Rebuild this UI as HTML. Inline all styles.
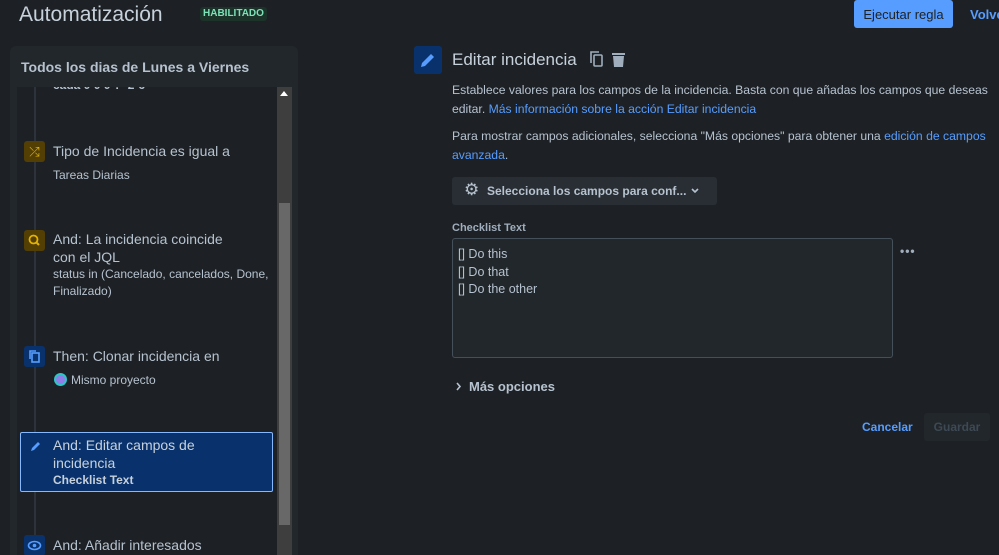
<!DOCTYPE html>
<html><head><meta charset="utf-8"><style>
*{margin:0;padding:0;box-sizing:border-box}
html,body{width:999px;height:555px;overflow:hidden}
body{background:#1d2125;font-family:"Liberation Sans",sans-serif;color:#b6c2cf;position:relative}
.a{position:absolute}
.t{font-size:14px;color:#b6c2cf;line-height:18px}
.s{font-size:12px;color:#b6c2cf;line-height:17px}
.ic{position:absolute;left:24px;width:21px;height:21px;border-radius:3px}
</style></head><body>
<div class="a" style="left:19px;top:3px;font-size:21px;color:#c7d1db">Automatización</div>
<div class="a" style="left:200px;top:7px;height:14px;padding:0 3px;background:#1c3329;color:#7ee2b8;font-size:10px;font-weight:bold;line-height:14px;border-radius:3px">HABILITADO</div>
<div class="a" style="left:854px;top:0;width:99px;height:28px;background:#579dff;border-radius:3px;color:#1d2125;font-size:13px;line-height:29px;text-align:center">Ejecutar regla</div>
<div class="a" style="left:970px;top:7px;color:#579dff;font-size:13px;font-weight:bold">Volve</div>

<div class="a" style="left:10px;top:46px;width:288px;height:520px;background:#22272b;border-radius:6px"></div>
<div class="a" style="left:21px;top:59px;font-size:14px;font-weight:bold;color:#b6c2cf">Todos los dias de Lunes a Viernes</div>
<div class="a" style="left:17px;top:87px;width:260px;height:470px;background:#1d2125;overflow:hidden">
 <div class="a" style="left:17px;top:0;width:2px;height:470px;background:#2c333a"></div>
 <div class="a" style="left:36px;top:-9px;font-size:12px;font-weight:bold;color:#b6c2cf;line-height:14px">cada 0 0 0 ? &nbsp;2-6</div>
</div>
<div class="a" style="left:277px;top:87px;width:15px;height:470px;background:#3e3e3e"></div>
<div class="a" style="left:279px;top:203px;width:11px;height:322px;background:#686868"></div>
<div class="a" style="left:280px;top:91px;width:0;height:0;border-left:4px solid transparent;border-right:4px solid transparent;border-bottom:5px solid #fff"></div>

<div class="ic" style="top:141px;background:#533f04;color:#e2b203;font-size:13px;text-align:center;line-height:21px">⤮</div>
<div class="a t" style="left:53px;top:142px">Tipo de Incidencia es igual a</div>
<div class="a s" style="left:53px;top:167px">Tareas Diarias</div>

<div class="ic" style="top:230px;background:#533f04"><svg width="21" height="21"><circle cx="9.5" cy="9.5" r="4" fill="none" stroke="#e2b203" stroke-width="1.8"/><path d="M12.5 12.5 15 15" stroke="#e2b203" stroke-width="2"/></svg></div>
<div class="a t" style="left:53px;top:231px;line-height:17.5px">And: La incidencia coincide<br>con el JQL</div>
<div class="a s" style="left:53px;top:266px">status in (Cancelado, cancelados, Done,<br>Finalizado)</div>

<div class="ic" style="top:346px;background:#09326c"><svg width="21" height="21"><rect x="8" y="7" width="7" height="9" fill="none" stroke="#579dff" stroke-width="1.6"/><path d="M6 13V5h6" fill="none" stroke="#579dff" stroke-width="1.6"/></svg></div>
<div class="a t" style="left:53px;top:347px">Then: Clonar incidencia en</div>
<div class="a" style="left:54px;top:373px;width:13px;height:13px;border-radius:50%;background:#2dc6c6"><div style="margin:2px;width:9px;height:9px;border-radius:50%;background:#8f7ee7"></div></div>
<div class="a s" style="left:71px;top:372px">Mismo proyecto</div>

<div class="a" style="left:20px;top:432px;width:253px;height:60px;background:#09326c;border:1px solid #85b8ff;border-radius:2px"></div>
<svg class="a" style="left:29px;top:439px" width="14" height="14"><path d="M2 12 3 9 9 3 11 5 5 11Z" fill="#579dff"/></svg>
<div class="a t" style="left:53px;top:436px;line-height:18px;color:#c7d1db">And: Editar campos de<br>incidencia</div>
<div class="a" style="left:53px;top:473px;font-size:12px;font-weight:bold;color:#c7d1db">Checklist Text</div>

<div class="ic" style="top:535px;background:#09326c"><svg width="21" height="21"><ellipse cx="10.5" cy="10.5" rx="6" ry="4" fill="none" stroke="#579dff" stroke-width="1.6"/><circle cx="10.5" cy="10.5" r="1.8" fill="#579dff"/></svg></div>
<div class="a t" style="left:53px;top:536px">And: Añadir interesados</div>

<div class="a" style="left:414px;top:46px;width:28px;height:28px;background:#09326c;border-radius:3px"><svg width="28" height="28"><path d="M7 21 8 17 17 8 20 11 11 20Z" fill="#579dff"/></svg></div>
<div class="a" style="left:452px;top:50px;font-size:17px;color:#c7d1db">Editar incidencia</div>
<svg class="a" style="left:589px;top:51px" width="40" height="18"><rect x="5" y="4" width="8" height="11" rx="1" fill="none" stroke="#9fadbc" stroke-width="1.6"/><path d="M2 12V1h8" fill="none" stroke="#9fadbc" stroke-width="1.6"/><rect x="23" y="2" width="13" height="2" fill="#9fadbc"/><path d="M24 5h11l-1 11h-9Z" fill="#9fadbc"/></svg>
<div class="a" style="left:452px;top:81px;font-size:12.2px;line-height:19px;color:#b6c2cf;width:545px;white-space:nowrap">Establece valores para los campos de la incidencia. Basta con que añadas los campos que deseas<br>editar. <span style="color:#579dff">Más información sobre la acción Editar incidencia</span></div>
<div class="a" style="left:452px;top:127px;font-size:12.2px;line-height:19px;color:#b6c2cf;width:545px;white-space:nowrap">Para mostrar campos adicionales, selecciona "Más opciones" para obtener una <span style="color:#579dff">edición de campos</span><br><span style="color:#579dff">avanzada</span>.</div>
<div class="a" style="left:452px;top:177px;width:265px;height:28px;background:#282e33;border-radius:3px"></div>
<div class="a" style="left:464px;top:180px;font-size:17px;color:#b6c2cf">⚙</div>
<div class="a" style="left:487px;top:184px;font-size:12px;font-weight:bold;color:#b6c2cf">Selecciona los campos para conf...</div>
<svg class="a" style="left:690px;top:187px" width="10" height="8"><path d="M2 2 5 5 8 2" fill="none" stroke="#b6c2cf" stroke-width="1.6"/></svg>
<div class="a" style="left:452px;top:222px;font-size:11px;font-weight:bold;color:#9fadbc">Checklist Text</div>
<div class="a" style="left:452px;top:238px;width:441px;height:120px;background:#22272b;border:1.5px solid #454f59;border-radius:3px"></div>
<div class="a" style="left:458px;top:246px;font-size:12.5px;line-height:17.7px;color:#b6c2cf">[] Do this<br>[] Do that<br>[] Do the other</div>
<div class="a" style="left:900px;top:244px;font-size:12px;color:#9fadbc;letter-spacing:1px;font-weight:bold">•••</div>
<svg class="a" style="left:455px;top:382px" width="8" height="9"><path d="M2 1 5 4.5 2 8" fill="none" stroke="#b6c2cf" stroke-width="1.6"/></svg>
<div class="a" style="left:469px;top:379px;font-size:13px;font-weight:bold;color:#b6c2cf">Más opciones</div>
<div class="a" style="left:862px;top:420px;font-size:12px;font-weight:bold;color:#579dff">Cancelar</div>
<div class="a" style="left:924px;top:413px;width:66px;height:28px;background:#22272b;border-radius:3px;color:#3d4954;font-size:12px;font-weight:bold;text-align:center;line-height:28px">Guardar</div>
</body></html>
